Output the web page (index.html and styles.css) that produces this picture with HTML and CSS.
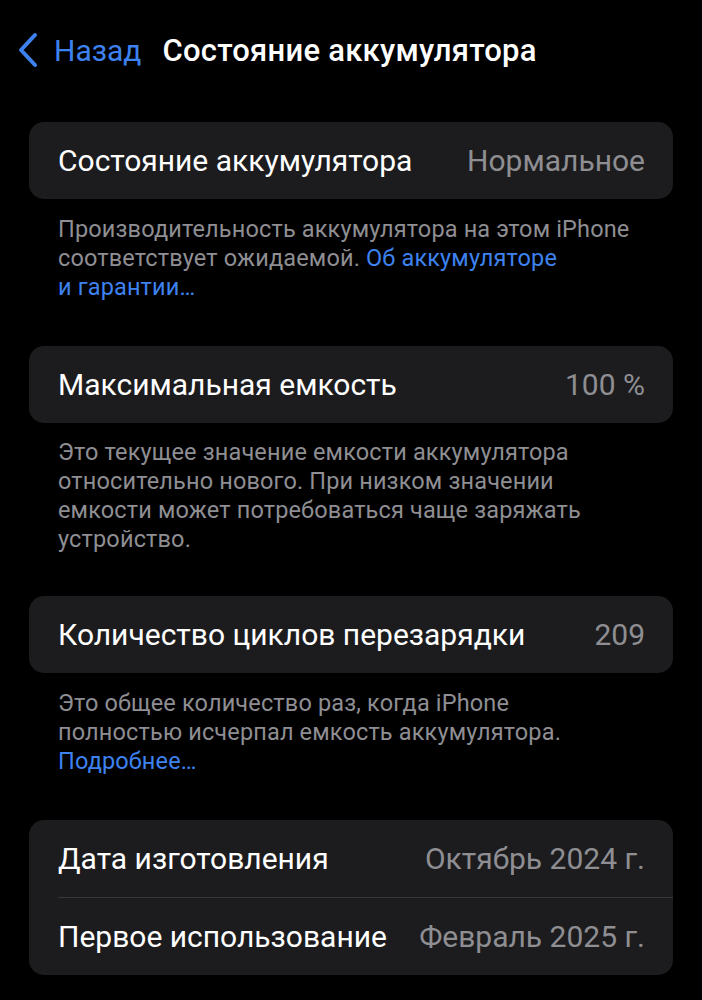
FILE: index.html
```html
<!DOCTYPE html>
<html lang="ru">
<head>
<meta charset="utf-8">
<link rel="stylesheet" href="styles.css">
</head>
<body>
<div class="screen">
  <header class="nav">
    <a class="back">
      <svg class="chev" width="24" height="36" viewBox="0 0 24 36"><path d="M19 3 L5 18 L19 33" fill="none" stroke="#3e82f0" stroke-width="4" stroke-linecap="round" stroke-linejoin="round"/></svg>
      <span>Назад</span>
    </a>
    <h1 class="title">Состояние аккумулятора</h1>
  </header>

  <section class="group">
    <div class="card">
      <div class="row"><span class="label">Состояние аккумулятора</span><span class="value">Нормальное</span></div>
    </div>
    <p class="note">Производительность аккумулятора на этом iPhone<br>соответствует ожидаемой. <span class="link">Об аккумуляторе</span><br><span class="link">и гарантии…</span></p>
  </section>

  <section class="group">
    <div class="card">
      <div class="row"><span class="label">Максимальная емкость</span><span class="value">100 %</span></div>
    </div>
    <p class="note tight">Это текущее значение емкости аккумулятора<br>относительно нового. При низком значении<br>емкости может потребоваться чаще заряжать<br>устройство.</p>
  </section>

  <section class="group">
    <div class="card">
      <div class="row"><span class="label">Количество циклов перезарядки</span><span class="value">209</span></div>
    </div>
    <p class="note">Это общее количество раз, когда iPhone<br>полностью исчерпал емкость аккумулятора.<br><span class="link">Подробнее…</span></p>
  </section>

  <section class="group last">
    <div class="card">
      <div class="row"><span class="label">Дата изготовления</span><span class="value">Октябрь 2024 г.</span></div>
      <div class="row divided"><span class="label">Первое использование</span><span class="value">Февраль 2025 г.</span></div>
    </div>
  </section>
</div>
</body>
</html>
```

FILE: styles.css
```css
* { box-sizing: border-box; }
html, body { margin: 0; padding: 0; background: #000; }
body {
  font-family: Roboto, "Noto Sans", sans-serif;
  color: #fff;
  width: 702px;
  height: 1000px;
  overflow: hidden;
}
.screen { padding: 0 29px 0 29px; }
.nav {
  display: flex;
  align-items: center;
  height: 102px;
  margin-left: -13px;
  padding-bottom: 2px;
}
.back {
  display: flex;
  align-items: center;
  color: #3e82f0;
  font-size: 30px;
  gap: 14px;
}
.chev { display: block; }
.title {
  margin: 0 0 0 21px;
  font-size: 31px;
  font-weight: 500;
  letter-spacing: 0.25px;
}
.group { margin-top: 20px; }
.card {
  background: #1c1c1e;
  border-radius: 15px;
  padding-left: 29px;
}
.row {
  display: flex;
  justify-content: space-between;
  align-items: center;
  height: 77px;
  padding-right: 28px;
  font-size: 30px;
}
.row.divided { border-top: 1px solid #38383a; height: 78px; }
.label { color: #fff; }
.value { color: #8e8e93; }
.note {
  margin: 0;
  padding: 16px 10px 24px 29px;
  font-size: 23.5px;
  letter-spacing: 0.15px;
  line-height: 29px;
  color: #8e8e93;
  white-space: nowrap;
}
.note.tight { padding-top: 15px; padding-bottom: 22px; }
.link { color: #3e82f0; }
```
